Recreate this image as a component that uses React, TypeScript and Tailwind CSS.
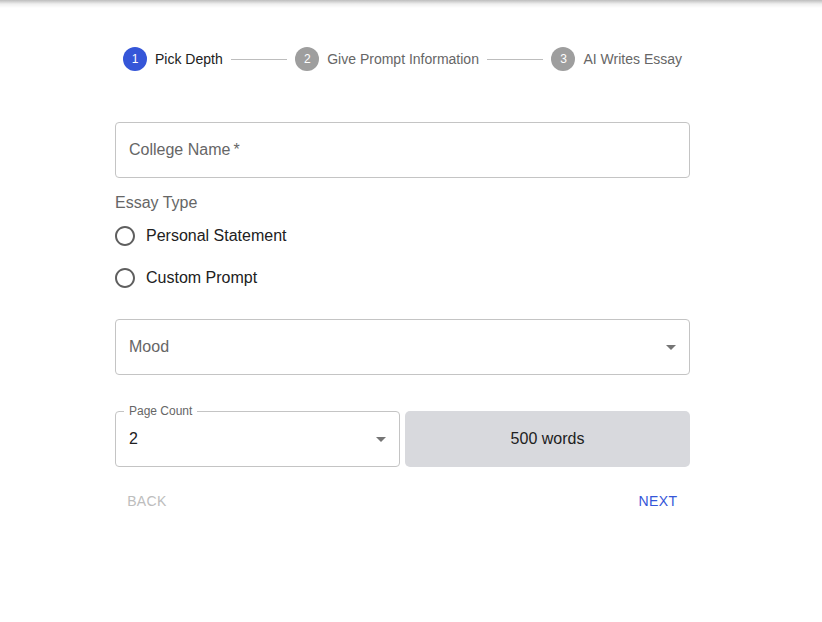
import React from 'react';

const STEPS = ["Pick Depth", "Give Prompt Information", "AI Writes Essay"];

function DropArrow() {
  return (
    <svg width="24" height="24" viewBox="0 0 24 24" className="shrink-0 text-[#757575]" fill="currentColor">
      <path d="M7 10l5 5 5-5z" />
    </svg>
  );
}

function RadioRow({ label }: { label: string }) {
  return (
    <label className="flex items-center h-[42px] -ml-[11px] cursor-pointer">
      <span className="p-[9px] flex">
        <svg width="24" height="24" viewBox="0 0 24 24" fill="#5f5f5f">
          <path d="M12 2C6.48 2 2 6.48 2 12s4.48 10 10 10 10-4.48 10-10S17.52 2 12 2zm0 18c-4.42 0-8-3.58-8-8s3.58-8 8-8 8 3.58 8 8-3.58 8-8 8z" />
        </svg>
      </span>
      <span className="text-[16px] text-[#212121]">{label}</span>
    </label>
  );
}

export default function App() {
  return (
    <div className="min-h-[622px] bg-white font-[family-name:'Liberation_Sans',Arial,sans-serif]">
      <div className="h-[8px] bg-linear-to-b from-[#bdbdbd] via-[#efefef] to-white" />

      <div className="ml-[115px] w-[575px]">
        {/* stepper */}
        <div className="mt-[39px] h-6 px-2 flex items-center">
          {STEPS.map((step, i) => (
            <React.Fragment key={step}>
              {i > 0 && <div className="flex-1 mx-2 h-px bg-[#bdbdbd]" />}
              <div className="flex items-center gap-2">
                <span
                  className={
                    "w-6 h-6 rounded-full flex items-center justify-center text-[12px] text-white " +
                    (i === 0 ? "bg-[#3556d8]" : "bg-[#9e9e9e]")
                  }
                >
                  {i + 1}
                </span>
                <span className={"text-[14px] " + (i === 0 ? "text-[#212121]" : "text-[#666666]")}>{step}</span>
              </div>
            </React.Fragment>
          ))}
        </div>

        {/* college name */}
        <div className="mt-[51px] h-[56px] border border-[#c4c4c4] rounded-[4px] flex items-center px-[13px]">
          <span className="text-[16px] text-[#666666]">College Name{"\u2009"}*</span>
        </div>

        {/* essay type */}
        <div className="mt-[13px] text-[16px] leading-6 text-[#666666]">Essay Type</div>
        <div className="flex flex-col">
          <RadioRow label="Personal Statement" />
          <RadioRow label="Custom Prompt" />
        </div>

        {/* mood */}
        <div className="mt-[20px] h-[56px] border border-[#c4c4c4] rounded-[4px] flex items-center pl-[13px] pr-[6px]">
          <span className="flex-1 text-[16px] text-[#666666]">Mood</span>
          <DropArrow />
        </div>

        {/* page count */}
        <div className="mt-[36px] flex justify-between h-[56px]">
          <div className="relative w-[285px] border border-[#c4c4c4] rounded-[4px] flex items-center pl-[13px] pr-[6px]">
            <span className="absolute -top-[8px] left-[8px] px-[5px] bg-white text-[12px] leading-[14px] text-[#666666]">
              Page Count
            </span>
            <span className="flex-1 text-[16px] text-[#212121]">2</span>
            <DropArrow />
          </div>
          <div className="w-[285px] rounded-[5px] bg-[#d8d9dd] flex items-center justify-center text-[16px] text-[#212121]">
            500 words
          </div>
        </div>

        {/* actions */}
        <div className="mt-[16px] flex justify-between">
          <button className="h-9 min-w-[64px] px-2 text-[14px] uppercase tracking-[0.4px] text-[#bdbdbd]" disabled>
            Back
          </button>
          <button className="h-9 min-w-[64px] px-2 text-[14px] uppercase tracking-[0.4px] text-[#3556d8]">
            Next
          </button>
        </div>
      </div>
    </div>
  );
}
